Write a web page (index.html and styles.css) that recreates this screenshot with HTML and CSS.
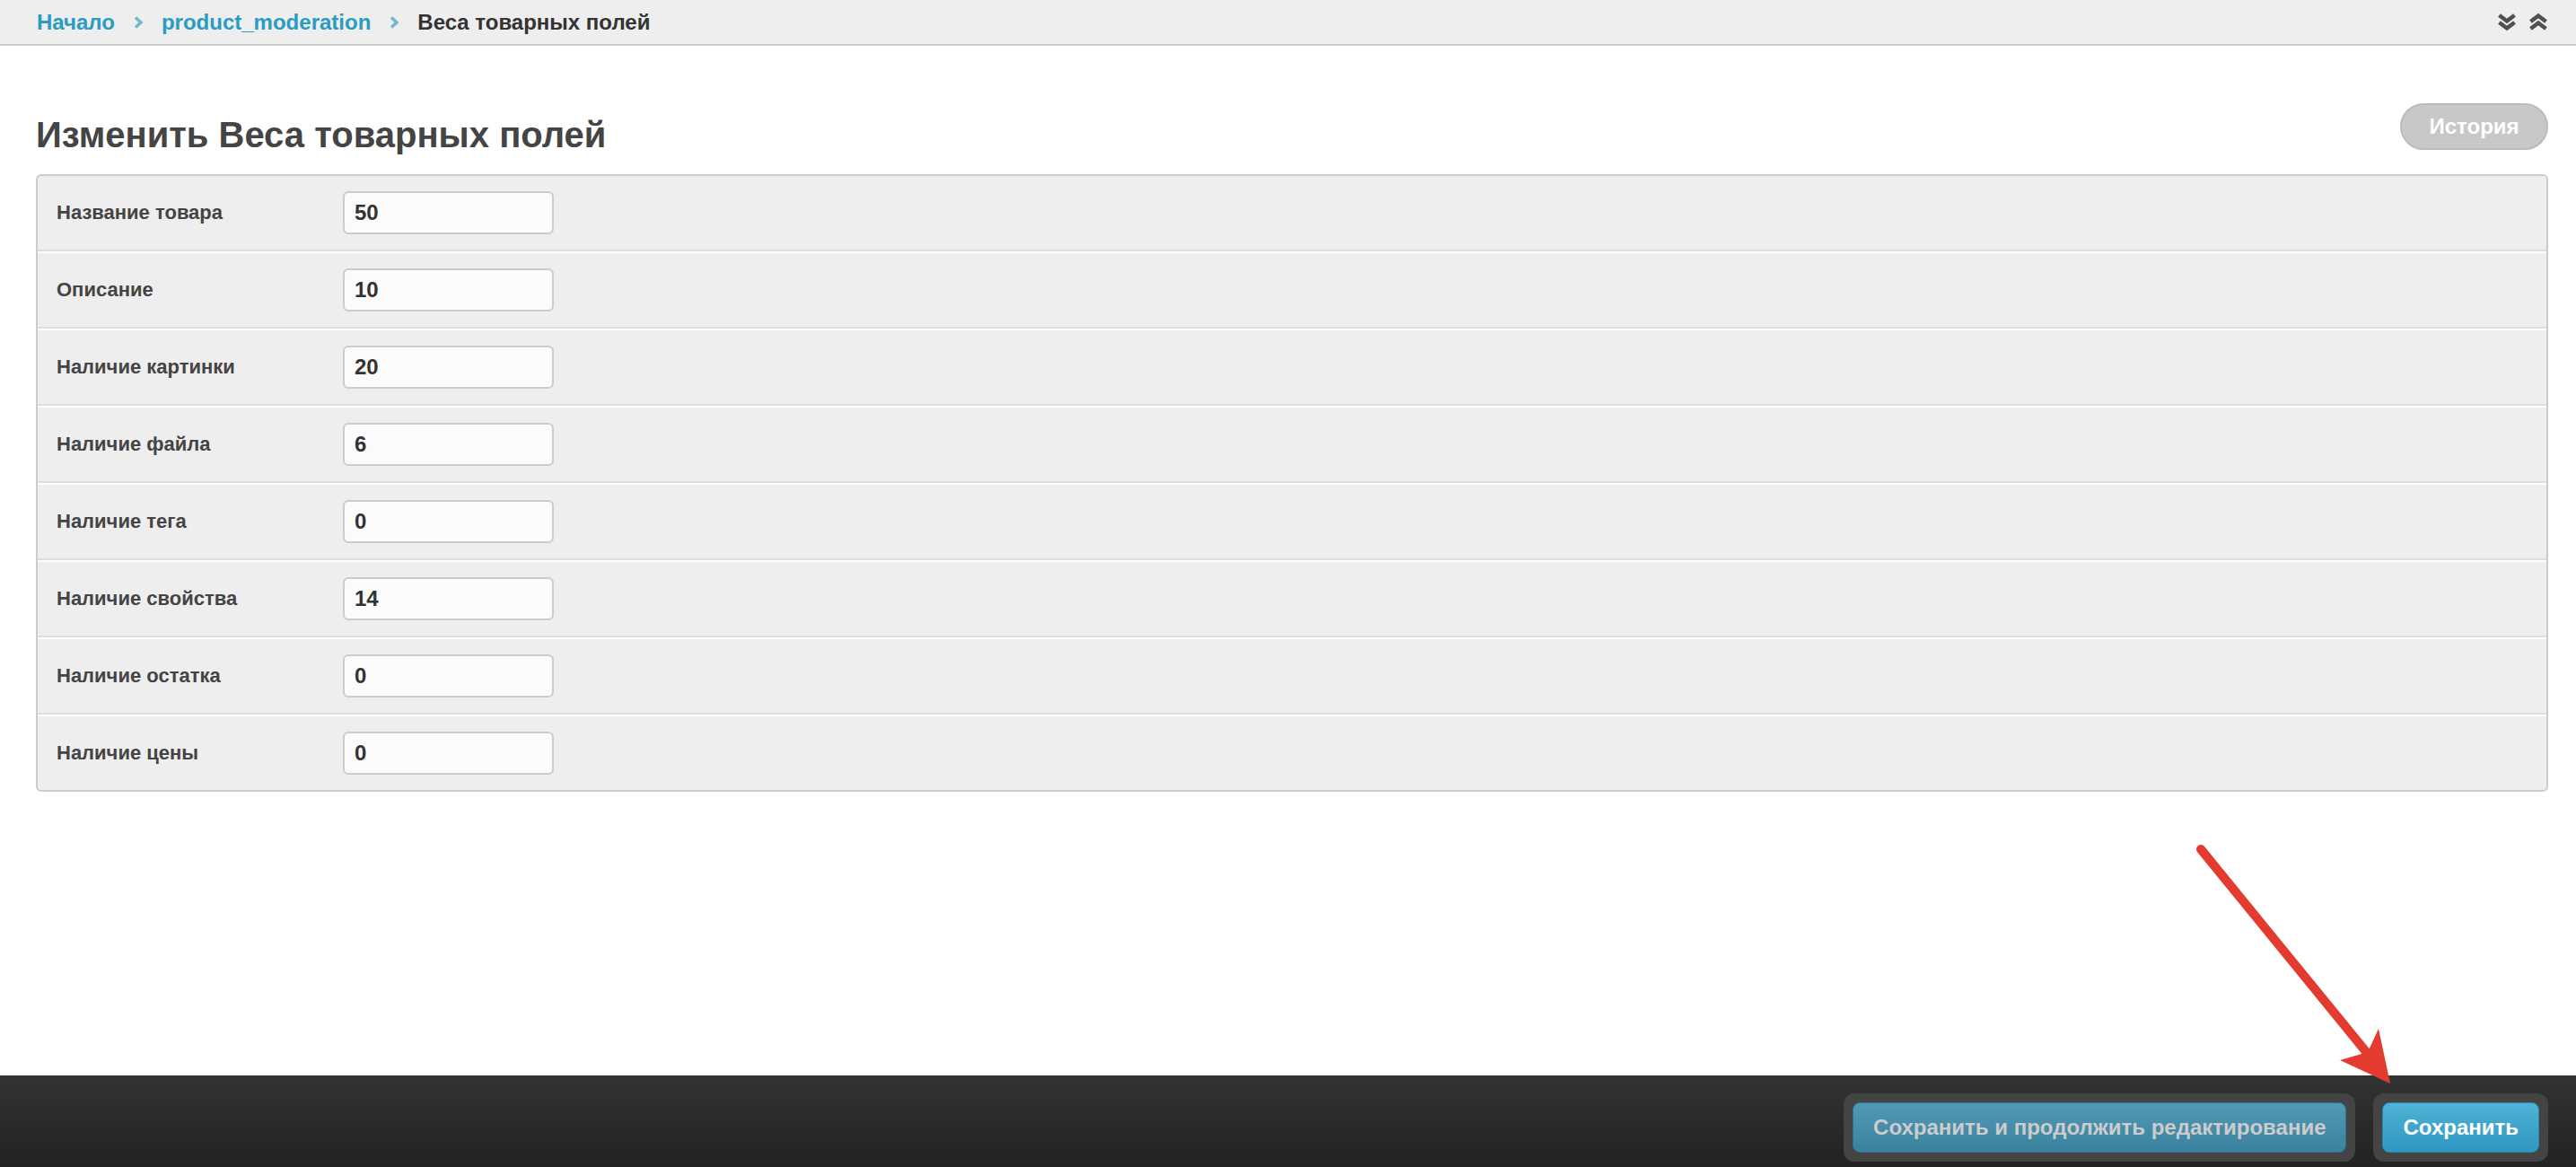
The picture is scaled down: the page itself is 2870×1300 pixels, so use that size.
FILE: index.html
```html
<!DOCTYPE html>
<html lang="ru">
<head>
    <meta charset="UTF-8">
    <meta name="viewport" content="width=device-width, initial-scale=1.0">
    <title>Изменить Веса товарных полей</title>
    <link rel="stylesheet" href="styles.css">
</head>
<body>
    <div class="breadcrumbs">
        <div class="crumbs">
            <a href="#">Начало</a>
            <svg class="sep" width="10" height="14" viewBox="0 0 10 14"><polyline points="2,1.5 8,7 2,12.5"/></svg>
            <a href="#">product_moderation</a>
            <svg class="sep" width="10" height="14" viewBox="0 0 10 14"><polyline points="2,1.5 8,7 2,12.5"/></svg>
            <span class="current">Веса товарных полей</span>
        </div>
        <div class="toggles">
            <svg width="22" height="21" viewBox="0 0 22 21"><polyline points="2.5,3 11,9.5 19.5,3"/><polyline points="2.5,11 11,17.5 19.5,11"/></svg>
            <svg width="22" height="21" viewBox="0 0 22 21"><polyline points="2.5,10 11,3.5 19.5,10"/><polyline points="2.5,18 11,11.5 19.5,18"/></svg>
        </div>
    </div>

    <div class="content">
        <div class="page-head">
            <h1>Изменить Веса товарных полей</h1>
            <button class="history">История</button>
        </div>

        <div class="form-panel">
            <div class="form-row">
                <label>Название товара</label>
                <input type="text" value="50">
            </div>
            <div class="form-row">
                <label>Описание</label>
                <input type="text" value="10">
            </div>
            <div class="form-row">
                <label>Наличие картинки</label>
                <input type="text" value="20">
            </div>
            <div class="form-row">
                <label>Наличие файла</label>
                <input type="text" value="6">
            </div>
            <div class="form-row">
                <label>Наличие тега</label>
                <input type="text" value="0">
            </div>
            <div class="form-row">
                <label>Наличие свойства</label>
                <input type="text" value="14">
            </div>
            <div class="form-row">
                <label>Наличие остатка</label>
                <input type="text" value="0">
            </div>
            <div class="form-row">
                <label>Наличие цены</label>
                <input type="text" value="0">
            </div>
        </div>
    </div>

    <div class="submit-row">
        <div class="btn-group">
            <button class="btn btn-continue">Сохранить и продолжить редактирование</button>
        </div>
        <div class="btn-group">
            <button class="btn btn-save">Сохранить</button>
        </div>
    </div>

    <!-- стрелка-пометка поверх страницы -->
    <svg class="annotation" width="240" height="280" viewBox="2440 935 240 280">
        <line x1="2452" y1="946" x2="2638" y2="1174" stroke="#e43b31" stroke-width="10" stroke-linecap="round"/>
        <polygon points="2663,1207 2607,1181 2638,1172 2650,1146" fill="#e43b31"/>
    </svg>
</body>
</html>
```

FILE: styles.css
```css
html, body {
    margin: 0;
    padding: 0;
    height: 100%;
}
body {
    font-family: "Liberation Sans", Arial, sans-serif;
    background-color: #ffffff;
    color: #444444;
    display: flex;
    flex-direction: column;
    min-height: 100vh;
    position: relative;
    overflow: hidden;
}
.breadcrumbs {
    height: 49px;
    border-bottom: 2px solid #cccccc;
    background-color: #eeeeee;
    padding: 0 31px 0 41px;
    display: flex;
    align-items: center;
    justify-content: space-between;
    font-size: 24px;
    font-weight: bold;
}
.crumbs {
    display: flex;
    align-items: center;
}
.crumbs a {
    color: #2a9bc2;
    text-decoration: none;
}
.crumbs .current {
    color: #333333;
}
.sep {
    margin: 0 21px;
    fill: none;
    stroke: #72b6d0;
    stroke-width: 3.5;
}
.toggles {
    display: flex;
    gap: 13px;
}
.toggles svg {
    fill: none;
    stroke: #505050;
    stroke-width: 4.5;
}
.content {
    flex: 1;
    padding: 0 31px 0 40px;
}
.page-head {
    display: flex;
    justify-content: space-between;
    align-items: flex-start;
    padding-top: 64px;
    height: 79px;
}
.page-head h1 {
    margin: 11px 0 0 0;
    font-size: 40px;
    line-height: 48px;
    font-weight: bold;
    color: #444444;
}
.history {
    width: 165px;
    height: 52px;
    border: 2px solid #bbbbbb;
    border-radius: 26px;
    background-color: #c8c8c8;
    color: #ffffff;
    font-family: inherit;
    font-size: 24px;
    font-weight: bold;
    padding: 0;
}
.form-panel {
    border: 2px solid #cccccc;
    border-radius: 6px;
    background-color: #eeeeee;
}
.form-row {
    height: 82px;
    display: flex;
    align-items: center;
    padding-left: 21px;
    border-top: 2px solid #ffffff;
    border-bottom: 2px solid #dddddd;
}
.form-row:first-child {
    border-top: none;
}
.form-row:last-child {
    border-bottom: none;
}
.form-row label {
    width: 319px;
    font-size: 22px;
    font-weight: bold;
    color: #444444;
}
.form-row input {
    box-sizing: border-box;
    width: 235px;
    height: 48px;
    border: 2px solid #cccccc;
    border-radius: 6px;
    background-color: #fbfbfb;
    padding: 0 11px;
    font-family: inherit;
    font-size: 24px;
    font-weight: bold;
    color: #333333;
}
.submit-row {
    height: 102px;
    box-sizing: border-box;
    padding: 20px 31px 0 0;
    background: linear-gradient(to bottom, #333333, #222222);
    display: flex;
    justify-content: flex-end;
    align-items: flex-start;
    gap: 20px;
}
.btn-group {
    padding: 10px;
    background-color: #444444;
    border-radius: 12px;
}
.btn {
    height: 56px;
    padding: 0 22px;
    border: 1px solid #2d7390;
    border-radius: 8px;
    font-family: inherit;
    font-size: 24px;
    font-weight: bold;
    display: block;
}
.btn-continue {
    background: linear-gradient(to bottom, #519ab4, #3a819d);
    color: #cccccc;
}
.btn-save {
    background: linear-gradient(to bottom, #4fb3d6, #2f96c0);
    border-color: #2a86ad;
    color: #ffffff;
}
.annotation {
    position: absolute;
    left: 2440px;
    top: 935px;
    pointer-events: none;
}
```
